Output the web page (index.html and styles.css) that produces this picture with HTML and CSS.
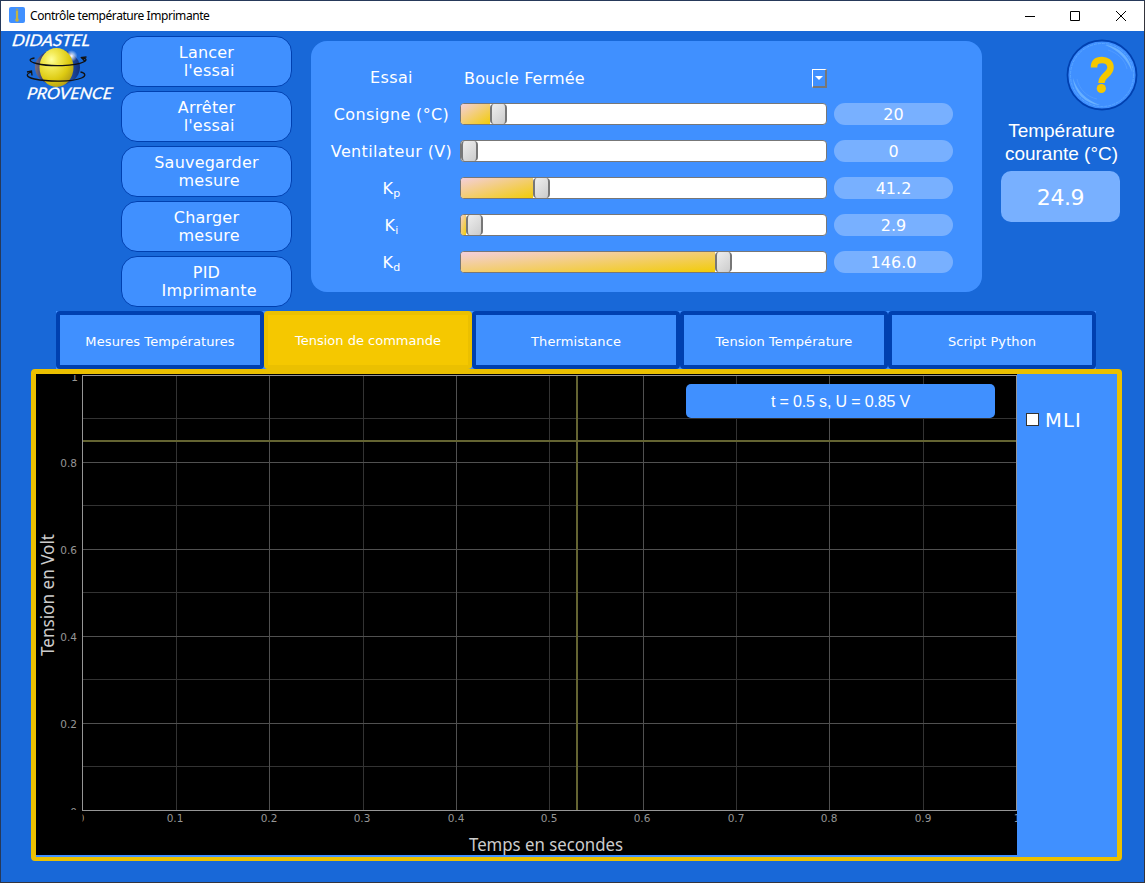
FILE: index.html
```html
<!DOCTYPE html>
<html lang="fr">
<head>
<meta charset="utf-8">
<title>Contrôle température Imprimante</title>
<link rel="stylesheet" href="styles.css">
</head>
<body>
<div class="window">
  <header class="titlebar">
    <svg class="app-icon" width="16" height="16" viewBox="0 0 16 16"><rect width="16" height="16" rx="2" fill="#4090ff"/><path d="M8 1.500v11" stroke="#8f9f86" stroke-width="2.400"/><path d="M8 4v9" stroke="#d9be28" stroke-width="1.400"/><circle cx="8" cy="13" r="1.800" fill="#c9b13d"/></svg>
    <span class="title">Contrôle température Imprimante</span>
    <svg class="controls" width="104" height="14" viewBox="0 0 104 14" fill="none" stroke="#000"><path d="M1 7.500h10M46.500 2.500h9v9h-9zM92 2l10 10M102 2l-10 10"/></svg>
  </header>
  <main class="content">
    <div class="top">
      <svg class="logo" width="120" height="72" viewBox="0 31 120 72">
        <defs>
          <radialGradient id="sun" cx=".35" cy=".3" r=".8"><stop offset="0" stop-color="#ffff9c"/><stop offset=".25" stop-color="#f3ea55"/><stop offset=".65" stop-color="#ddca12"/><stop offset="1" stop-color="#aa9418"/></radialGradient>
          <linearGradient id="shade" x1="0" x2="1"><stop offset="0" stop-color="#7f6f74"/><stop offset=".2" stop-color="#263a80"/><stop offset=".8" stop-color="#204ba4"/><stop offset="1" stop-color="#122e76"/></linearGradient>
          <radialGradient id="glow"><stop offset="0" stop-color="#fff"/><stop offset="1" stop-color="#fff" stop-opacity="0"/></radialGradient>
        </defs>
        <ellipse cx="57" cy="67.500" rx="22.500" ry="18" fill="url(#shade)"/>
        <circle cx="71" cy="56" r="6" fill="url(#glow)"/>
        <ellipse cx="56" cy="67.500" rx="17" ry="19.500" fill="url(#sun)"/>
        <g fill="none" stroke="#111" stroke-width="1.300">
          <path d="M34 58c-7 1-5 4 2 5.500C50 67 75 66 83 62c4-2 3-4-2-4"/>
          <path d="M86 57l-5 .5 3.500 4M31 72c-6 2-6 5 3 7 14 3 38 3 47-1 5-2 4-5-1-6M26.500 72l4.500-1 .5 4.500"/>
        </g>
        <g class="logo-text"><text transform="translate(11 46) skewX(-9)" textLength="78" lengthAdjust="spacingAndGlyphs">DIDASTEL</text><text transform="translate(26 98.500) skewX(-9)" textLength="85" lengthAdjust="spacingAndGlyphs">PROVENCE</text></g>
      </svg>
      <nav class="actions">
        <button>Lancer
 l'essai</button>
        <button>Arrêter
 l'essai</button>
        <button>Sauvegarder
 mesure</button>
        <button>Charger
 mesure</button>
        <button>PID
 Imprimante</button>
      </nav>
      <section class="settings">
        <div class="row mode"><span class="label">Essai</span><div class="combo"><span>Boucle Fermée</span><i class="arrow"></i></div></div>
        <div class="row"><span class="label">Consigne (°C)</span><div class="slider"><div class="fill" style="width:30px"></div><div class="handle"></div></div><span class="value">20</span></div>
        <div class="row"><span class="label">Ventilateur (V)</span><div class="slider"><div class="fill" style="width:1px"></div><div class="handle"></div></div><span class="value">0</span></div>
        <div class="row"><span class="label">K<small>p</small></span><div class="slider"><div class="fill" style="width:73px"></div><div class="handle"></div></div><span class="value">41.2</span></div>
        <div class="row"><span class="label">K<small>i</small></span><div class="slider"><div class="fill" style="width:6px"></div><div class="handle"></div></div><span class="value">2.9</span></div>
        <div class="row"><span class="label">K<small>d</small></span><div class="slider"><div class="fill" style="width:255px"></div><div class="handle"></div></div><span class="value">146.0</span></div>
      </section>
      <aside class="status">
        <svg class="help" width="72" height="72" viewBox="0 0 72 72">
          <circle cx="36" cy="36" r="34.500" fill="#4090ff" stroke="#0040b0" stroke-width="1.800"/>
          <circle cx="36" cy="36" r="31.500" fill="none" stroke="#5aa6ff" stroke-width="1" stroke-dasharray="3 1"/>
          <path d="M39 6C53 7 65 19 66 33 61 20 52 11 39 6" fill="#68b0ff"/>
          <path d="M7 39c1 14 12 26 27 27C20 61 11 52 7 39" fill="#68b0ff"/>
          <path d="M11 40c2 10 10 18 20 20M42 11c10 3 17 10 19 19" fill="none" stroke="#509bff"/>
          <path d="M28 28.500C28 22.500 31.500 21 36 21s8.500 2.500 8.500 7.500c0 7-9 8-9 15.500" fill="none" stroke="#f5c800" stroke-width="6.500"/>
          <circle cx="35.300" cy="49.500" r="4.600" fill="#f5c800"/>
        </svg>
        <div class="caption">Température<br>courante (°C)</div>
        <div class="reading">24.9</div>
      </aside>
    </div>
    <div class="tabs">
      <div class="tab">Mesures Températures</div><div class="tab active">Tension de commande</div><div class="tab">Thermistance</div><div class="tab">Tension Température</div><div class="tab">Script Python</div>
    </div>
    <section class="pane">
      <div class="plot">
        <svg width="981" height="481" viewBox="36 374 981 481">
          <defs><clipPath id="ylab"><rect x="36" y="375" width="45" height="435"/></clipPath><clipPath id="xlab"><rect x="82.500" y="811" width="934.500" height="20"/></clipPath></defs>
          <g shape-rendering="crispEdges" fill="none">
            <path stroke="#333" d="M176.500 375V810M363.500 375V810M549.500 375V810M736.500 375V810M923.500 375V810M82 418.500H1016M82 505.500H1016M82 592.500H1016M82 679.500H1016M82 766.500H1016"/>
            <path stroke="#505050" d="M269.500 375V810M456.500 375V810M643.500 375V810M829.500 375V810M82 462.500H1016M82 549.500H1016M82 636.500H1016M82 723.500H1016"/>
            <path stroke="#969696" d="M82.500 375.500H1016.500V810.500H82.500Z"/>
            <path stroke="#646432" stroke-width="2" d="M577 376V810M83 441H1016"/>
          </g>
          <g class="ticks" text-anchor="end" clip-path="url(#ylab)"><text x="78" y="380.500">1</text><text x="77" y="467">0.8</text><text x="77" y="554">0.6</text><text x="77" y="641">0.4</text><text x="77" y="728">0.2</text><text x="77" y="815.500">0</text></g>
          <g class="ticks" text-anchor="middle" clip-path="url(#xlab)"><text x="81" y="822">0</text><text x="175" y="822">0.1</text><text x="269" y="822">0.2</text><text x="362" y="822">0.3</text><text x="456" y="822">0.4</text><text x="549" y="822">0.5</text><text x="642" y="822">0.6</text><text x="736" y="822">0.7</text><text x="829" y="822">0.8</text><text x="923" y="822">0.9</text><text x="1017" y="822">1</text></g>
          <g class="axis"><text x="469" y="851" textLength="154" lengthAdjust="spacingAndGlyphs">Temps en secondes</text><text transform="translate(54 656) rotate(-90)" textLength="122" lengthAdjust="spacingAndGlyphs">Tension en Volt</text></g>
        </svg>
        <div class="readout">t = 0.5 s, U = 0.85 V</div>
      </div>
      <label class="option"><i class="box"></i>MLI</label>
    </section>
  </main>
</div>
</body>
</html>
```
FILE: styles.css
```css
* { box-sizing: border-box; }
body { margin: 0; width: 1145px; height: 883px; overflow: hidden; font-family: "DejaVu Sans", sans-serif; }
.window { height: 883px; border: 1px solid #26395a; border-right-color: #34343c; border-bottom-color: #34343c; background: #1868d8; }
.titlebar { height: 30px; background: #fff; display: flex; align-items: center; padding: 0 16px 0 8px; }
.app-icon { margin-bottom: 2px; }
.title { margin: 0 0 1px 5px; font: 12px "Noto Sans", sans-serif; letter-spacing: -.44px; color: #000; }
.controls { margin: 0 0 1px auto; }
.content { display: flex; flex-direction: column; }
.top { display: flex; height: 280px; margin-left: -1px; }
.logo { flex: none; width: 121px; }
.logo-text { font: italic 16px Lato, sans-serif; fill: #fff; stroke: #fff; stroke-width: .25px; }
.actions { flex: none; display: flex; flex-direction: column; gap: 4px; padding-top: 5px; width: 171px; }
.actions button { flex: none; height: 51px; padding: 1px 0 0; border: 1px solid #0040b0; border-radius: 16px; background: #4090ff; color: #fff; font: 16px/18px "DejaVu Sans", sans-serif; letter-spacing: .2px; white-space: pre; text-align: center; }
.settings { flex: none; width: 671px; height: 251px; margin: 10px 0 0 19px; padding: 25px 0 0 14px; border-radius: 16px; background: #4090ff; color: #fff; font-size: 16px; letter-spacing: .35px; }
.row { display: grid; grid-template-columns: 131px 367px 119px; grid-template-rows: 22px; height: 22px; margin-bottom: 15px; padding-left: 4px; align-items: start; }
.row .value { margin-left: 7px; width: 119px; }
.mode { grid-template-rows: 24px; height: 24px; margin-bottom: 13px; }
.label { padding-right: 6px; text-align: center; line-height: 24px; white-space: nowrap; }
.label small { font-size: 11px; position: relative; top: 3px; line-height: 0; }
.combo { display: flex; align-items: center; justify-content: space-between; padding-left: 4px; height: 24px; letter-spacing: .15px; }
.arrow { width: 15px; height: 19px; border: 1px solid #fff; border-right: 2px solid #777; border-bottom: 2px solid #777; display: flex; align-items: center; justify-content: center; }
.arrow::after { content: ""; border: 4px solid transparent; border-top-color: #fff; border-bottom: 0; }
.slider { display: flex; height: 22px; border: 1px solid #777; border-radius: 4px; background: #fff; overflow: hidden; }
.fill { margin-left: -1px; background: linear-gradient(to bottom right, #f4cfdd, #f2cc08); }
.handle { width: 17px; border: 2px solid #777; border-top-width: 0; border-bottom-width: 0; border-radius: 4px; background: linear-gradient(135deg, #eee, #ccc); }
.value { height: 22px; border-radius: 11px; background: #78b0ff; text-align: center; line-height: 23px; letter-spacing: 0; }
.status { flex: none; width: 162px; display: flex; flex-direction: column; padding: 8px 0 0 19px; color: #fff; }
.help { align-self: flex-end; margin-right: 6px; flex: none; }
.caption { width: 121px; margin-top: 8px; text-align: center; font: 19px/23px "Liberation Sans", sans-serif; white-space: nowrap; }
.reading { width: 119px; height: 51px; margin-top: 6px; border-radius: 10px; background: #78b0ff; font-size: 22px; line-height: 53px; text-align: center; letter-spacing: -.4px; }
.tabs { display: flex; width: 1040px; height: 58px; margin-left: 55px; background: #4090ff; }
.tab { flex: 1; border: 4px solid #0040b0; border-radius: 4px; color: #fff; font-size: 13px; letter-spacing: .1px; line-height: 53px; text-align: center; }
.tab.active { background: #f5c800; border-color: #ebc000; line-height: 51px; letter-spacing: 0; }
.pane { display: flex; width: 1091px; height: 492px; margin-left: 30px; border: 5px solid #ebc000; border-bottom-width: 4px; border-radius: 4px; background: #4090ff; }
.plot { position: relative; width: 981px; height: 481px; background: #000; }
.plot svg { display: block; }
.ticks { fill: #969696; font-size: 10.500px; }
.axis { fill: #ccc; font: 18px "Noto Sans", sans-serif; }
.readout { position: absolute; left: 650px; top: 10px; width: 309px; height: 34px; border-radius: 5px; background: #4090ff; color: #fff; font: 16px/35px "Liberation Sans", sans-serif; letter-spacing: -.15px; text-align: center; }
.option { display: flex; align-items: center; gap: 6px; height: 24px; margin: 34px 0 0 9px; color: #fff; font-size: 19.500px; letter-spacing: 1.100px; }
.box { width: 13px; height: 13px; margin-bottom: 2px; border: 1px solid #333; background: #fff; }
```
